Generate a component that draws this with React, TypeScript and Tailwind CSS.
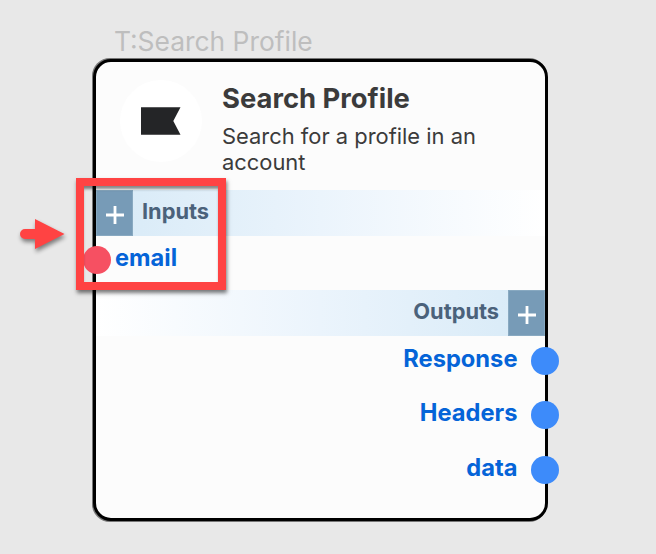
type HeaderProps = { label: string; side: "left" | "right" };

function Plus() {
  return (
    <svg width="18" height="18" viewBox="0 0 18 18" aria-hidden="true">
      <path d="M9 0v18M0 9h18" stroke="#ffffff" strokeWidth="2.8" fill="none" />
    </svg>
  );
}

function SectionHeader({ label, side }: HeaderProps) {
  const left = side === "left";
  return (
    <div
      className={
        left
          ? "flex h-[46px] bg-linear-to-r from-[#d7eaf7] via-[#ebf4fc] to-white"
          : "flex h-[46px] flex-row-reverse bg-linear-to-l from-[#d7eaf7] via-[#ebf4fc] to-white"
      }
    >
      <button
        aria-label={"Add " + label}
        className="flex w-[37px] items-center justify-center bg-[#779bb7] pt-[3px] shadow-[inset_0_0_0_1px_#88a9c1]"
      >
        <Plus />
      </button>
      <span className="px-[9px] pt-[7px] text-[21.800px] leading-[28px] font-bold text-[#4b627b]">{label}</span>
    </div>
  );
}

function OutputPort({ name }: { name: string }) {
  return (
    <div className="-mr-[14px] flex h-[28px] items-center justify-end gap-[13.500px]">
      <span className="-mt-[4px] text-[23.700px] leading-[28px] font-bold text-[#0564d8]">{name}</span>
      <span className="size-[28px] rounded-full bg-[#3d8bfa]" />
    </div>
  );
}

export default function App() {
  return (
    <main className="relative h-[554px] w-[656px] overflow-hidden bg-[#e8e8e8] font-['Inter',sans-serif]">
      <div className="flex w-[548px] flex-col pt-[25px] pl-[93px]">
        <h1 className="h-[34px] pl-[21px] text-[26.400px] leading-[32px] whitespace-nowrap text-[#bebebe]">T:Search Profile</h1>
        <section className="flex h-[462px] flex-col rounded-[18px] border-[3px] border-black bg-[#fcfcfc] shadow-[-1px_-1px_0_#777,-1px_1px_0_#777]">
          <header className="flex h-[128px] shrink-0 pt-[18px] pl-[24px]">
            <div className="flex size-[82px] shrink-0 items-center justify-center rounded-full bg-white pr-[2px]">
              <svg width="41" height="28" viewBox="0 0 41 28" aria-hidden="true">
                <path d="M1 0.3H40.5L33.3 14L40.5 27.7H1Z" fill="#242527" />
              </svg>
            </div>
            <div className="pl-[20px] text-[#3b3b3b]">
              <h2 className="text-[27.400px] leading-[36px] font-bold whitespace-nowrap">Search Profile</h2>
              <p className="w-[290px] pt-[7px] text-[21.900px] leading-[26px]">Search for a profile in an account</p>
            </div>
          </header>
          <SectionHeader label="Inputs" side="left" />
          <div className="-ml-[13px] flex h-[54px] items-start gap-[4px] pt-[10px]">
            <span className="size-[28px] rounded-full bg-[#f65062]" />
            <span className="-mt-[2px] text-[23.600px] leading-[28px] font-bold text-[#0564d8]">email</span>
          </div>
          <SectionHeader label="Outputs" side="right" />
          <div className="flex flex-col gap-[26.600px] pt-[10.600px]">
            <OutputPort name="Response" />
            <OutputPort name="Headers" />
            <OutputPort name="data" />
          </div>
        </section>
      </div>
      <div className="absolute top-[178px] left-[76px] h-[112px] w-[150px] border-8 border-[#ff4343] shadow-[1px_3px_4px_#0008,inset_0_4px_3px_-1px_#0007]" />
      <svg
        className="absolute top-[214px] left-[14px] drop-shadow-[1px_3px_2px_#0007]"
        width="60"
        height="44"
        viewBox="14 214 60 44"
        aria-hidden="true"
      >
        <path d="M25 229H35V219L64.500 234L35 249V239H25A5 5 0 0 1 25 229Z" fill="#ff4343" />
      </svg>
    </main>
  );
}
